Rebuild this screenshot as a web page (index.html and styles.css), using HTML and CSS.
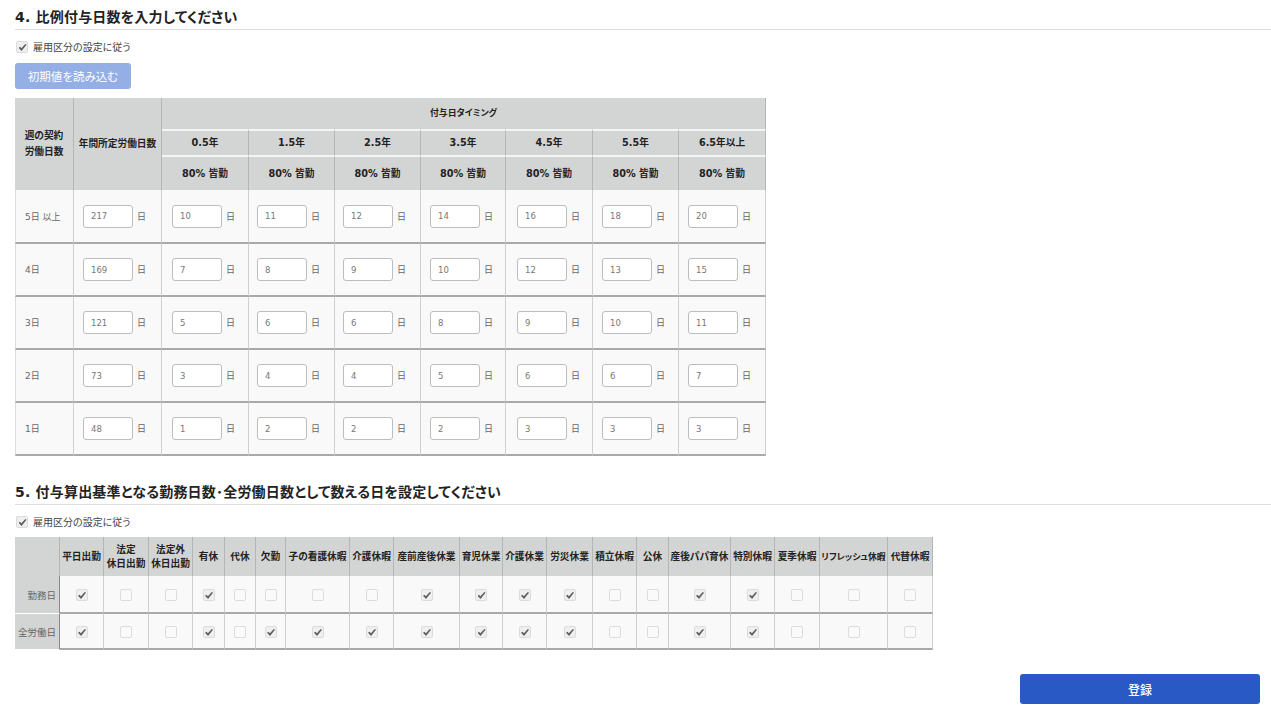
FILE: index.html
```html
<!DOCTYPE html>
<html lang="ja">
<head>
<meta charset="utf-8">
<title>比例付与日数</title>
<link rel="stylesheet" href="styles.css">
</head>
<body>
<section class="sec sec-4">
  <h2 class="title">4. 比例付与日数を入力してください</h2>
  <label class="follow"><input type="checkbox" class="cb" checked disabled><span>雇用区分の設定に従う</span></label>
  <button class="load" type="button" disabled>初期値を読み込む</button>
  <table class="grant">
    <colgroup><col class="g1"><col class="g2"><col class="g3"><col class="g4"><col class="g4"><col class="g5"><col class="g3"><col class="g4"><col class="g3"></colgroup>
    <thead>
      <tr class="h1"><th rowspan="3">週の契約<br>労働日数</th><th rowspan="3">年間所定労働日数</th><th colspan="7" class="timing">付与日タイミング</th></tr>
      <tr class="h2"><th>0.5年</th><th>1.5年</th><th>2.5年</th><th>3.5年</th><th>4.5年</th><th>5.5年</th><th>6.5年以上</th></tr>
      <tr class="h3"><th>80% 皆勤</th><th>80% 皆勤</th><th>80% 皆勤</th><th>80% 皆勤</th><th>80% 皆勤</th><th>80% 皆勤</th><th>80% 皆勤</th></tr>
    </thead>
    <tbody>
      <tr><td>5日 以上</td><td><input class="num" value="217" readonly><i>日</i></td><td><input class="num" value="10" readonly><i>日</i></td><td><input class="num" value="11" readonly><i>日</i></td><td><input class="num" value="12" readonly><i>日</i></td><td><input class="num" value="14" readonly><i>日</i></td><td><input class="num" value="16" readonly><i>日</i></td><td><input class="num" value="18" readonly><i>日</i></td><td><input class="num" value="20" readonly><i>日</i></td></tr>
      <tr><td>4日</td><td><input class="num" value="169" readonly><i>日</i></td><td><input class="num" value="7" readonly><i>日</i></td><td><input class="num" value="8" readonly><i>日</i></td><td><input class="num" value="9" readonly><i>日</i></td><td><input class="num" value="10" readonly><i>日</i></td><td><input class="num" value="12" readonly><i>日</i></td><td><input class="num" value="13" readonly><i>日</i></td><td><input class="num" value="15" readonly><i>日</i></td></tr>
      <tr><td>3日</td><td><input class="num" value="121" readonly><i>日</i></td><td><input class="num" value="5" readonly><i>日</i></td><td><input class="num" value="6" readonly><i>日</i></td><td><input class="num" value="6" readonly><i>日</i></td><td><input class="num" value="8" readonly><i>日</i></td><td><input class="num" value="9" readonly><i>日</i></td><td><input class="num" value="10" readonly><i>日</i></td><td><input class="num" value="11" readonly><i>日</i></td></tr>
      <tr><td>2日</td><td><input class="num" value="73" readonly><i>日</i></td><td><input class="num" value="3" readonly><i>日</i></td><td><input class="num" value="4" readonly><i>日</i></td><td><input class="num" value="4" readonly><i>日</i></td><td><input class="num" value="5" readonly><i>日</i></td><td><input class="num" value="6" readonly><i>日</i></td><td><input class="num" value="6" readonly><i>日</i></td><td><input class="num" value="7" readonly><i>日</i></td></tr>
      <tr><td>1日</td><td><input class="num" value="48" readonly><i>日</i></td><td><input class="num" value="1" readonly><i>日</i></td><td><input class="num" value="2" readonly><i>日</i></td><td><input class="num" value="2" readonly><i>日</i></td><td><input class="num" value="2" readonly><i>日</i></td><td><input class="num" value="3" readonly><i>日</i></td><td><input class="num" value="3" readonly><i>日</i></td><td><input class="num" value="3" readonly><i>日</i></td></tr>
    </tbody>
  </table>
</section>
<section class="sec sec-5">
  <h2 class="title">5. 付与算出基準となる勤務日数･全労働日数として数える日を設定してください</h2>
  <label class="follow"><input type="checkbox" class="cb" checked disabled><span>雇用区分の設定に従う</span></label>
  <table class="days">
    <colgroup><col class="w45"><col class="w44"><col class="w45"><col class="w44"><col class="w32"><col class="w31"><col class="w30"><col class="w64"><col class="w44"><col class="w66"><col class="w43"><col class="w44"><col class="w46"><col class="w44"><col class="w32"><col class="w62"><col class="w44"><col class="w45"><col class="w68"><col class="w45"></colgroup>
    <thead>
      <tr><th></th><th>平日出勤</th><th>法定<br>休日出勤</th><th>法定外<br>休日出勤</th><th>有休</th><th>代休</th><th>欠勤</th><th>子の看護休暇</th><th>介護休暇</th><th>産前産後休業</th><th>育児休業</th><th>介護休業</th><th>労災休業</th><th>積立休暇</th><th>公休</th><th>産後パパ育休</th><th>特別休暇</th><th>夏季休暇</th><th class="tight">リフレッシュ休暇</th><th>代替休暇</th></tr>
    </thead>
    <tbody>
      <tr><th>勤務日</th><td><input type="checkbox" class="cb" checked disabled></td><td><input type="checkbox" class="cb" disabled></td><td><input type="checkbox" class="cb" disabled></td><td><input type="checkbox" class="cb" checked disabled></td><td><input type="checkbox" class="cb" disabled></td><td><input type="checkbox" class="cb" disabled></td><td><input type="checkbox" class="cb" disabled></td><td><input type="checkbox" class="cb" disabled></td><td><input type="checkbox" class="cb" checked disabled></td><td><input type="checkbox" class="cb" checked disabled></td><td><input type="checkbox" class="cb" checked disabled></td><td><input type="checkbox" class="cb" checked disabled></td><td><input type="checkbox" class="cb" disabled></td><td><input type="checkbox" class="cb" disabled></td><td><input type="checkbox" class="cb" checked disabled></td><td><input type="checkbox" class="cb" checked disabled></td><td><input type="checkbox" class="cb" disabled></td><td><input type="checkbox" class="cb" disabled></td><td><input type="checkbox" class="cb" disabled></td></tr>
      <tr><th>全労働日</th><td><input type="checkbox" class="cb" checked disabled></td><td><input type="checkbox" class="cb" disabled></td><td><input type="checkbox" class="cb" disabled></td><td><input type="checkbox" class="cb" checked disabled></td><td><input type="checkbox" class="cb" disabled></td><td><input type="checkbox" class="cb" checked disabled></td><td><input type="checkbox" class="cb" checked disabled></td><td><input type="checkbox" class="cb" checked disabled></td><td><input type="checkbox" class="cb" checked disabled></td><td><input type="checkbox" class="cb" checked disabled></td><td><input type="checkbox" class="cb" checked disabled></td><td><input type="checkbox" class="cb" checked disabled></td><td><input type="checkbox" class="cb" disabled></td><td><input type="checkbox" class="cb" disabled></td><td><input type="checkbox" class="cb" checked disabled></td><td><input type="checkbox" class="cb" checked disabled></td><td><input type="checkbox" class="cb" disabled></td><td><input type="checkbox" class="cb" disabled></td><td><input type="checkbox" class="cb" disabled></td></tr>
    </tbody>
  </table>
</section>
<footer class="actions"><button class="submit" type="button">登録</button></footer>
</body>
</html>
```
FILE: styles.css
```css
html, body { margin: 0; padding: 0; background: #fff; }
body {
  width: 1271px; height: 712px; overflow: hidden;
  font-family: "DejaVu Sans", "Noto Sans CJK JP", sans-serif;
  font-feature-settings: "palt";
  font-size: 9px; color: #222;
}
.sec { padding-left: 15px; }
.sec-4 { padding-top: 8px; }
.sec-5 { padding-top: 27px; }
.title {
  margin: 0; height: 21px; line-height: 19px; font-size: 14px; font-weight: 700;
  color: #222; border-bottom: 1px solid #ddd; letter-spacing: 0.2px;
}
.follow { display: flex; align-items: center; gap: 5px; height: 12px; margin-top: 10px; color: #444; font-size: 10px; }
.follow .cb { margin: 2px 0 0 1px; }
.cb {
  appearance: none; -webkit-appearance: none; display: block; position: relative;
  width: 12px; height: 12px; margin: 0; background: #fafafa;
  border: 1px solid #dcdcdc; border-radius: 2px; box-sizing: border-box;
}
.cb:checked { background: #efefef; }
.cb:checked::after {
  content: ""; position: absolute; left: 1.5px; top: 2px; width: 8px; height: 7px; background: #5e5e5e;
  clip-path: polygon(0 55%, 18% 38%, 36% 62%, 85% 0, 100% 12%, 38% 100%);
}
.load {
  display: block; margin-top: 11px; width: 116px; height: 26px; padding: 0;
  background: #94aee6; border: 0; border-radius: 3px; color: #fff;
  font-family: inherit; font-feature-settings: "palt"; font-size: 11.5px;
}
table { border-collapse: separate; border-spacing: 0; table-layout: fixed; }
th, td { box-sizing: border-box; padding: 0; }
.grant { margin-top: 9px; width: 751px; }
.g1 { width: 59px; } .g2 { width: 88px; } .g3 { width: 87px; } .g4 { width: 86px; } .g5 { width: 85px; }
.grant th {
  background: #d3d5d4; font-weight: 700; font-size: 9.7px; color: #222; text-align: center;
  border-right: 1px solid #b4b6b5; line-height: 16px;
}
.grant .h1 th { height: 31px; }
.grant .h1 .timing { font-size: 8.9px; padding-bottom: 2px; }
.grant .h2 th { height: 26px; border-top: 2px solid #f4f4f4; }
.grant .h3 th { height: 35px; border-top: 2px solid #f4f4f4; }
.grant td {
  height: 53px; background: #f9f9f9; border-right: 1px solid #cfcfcf; border-bottom: 2px solid #a9a9a9;
  color: #666; font-size: 9px; white-space: nowrap; padding-left: 10px;
}
.grant tbody tr:first-child td { height: 54px; }
.grant td:first-child { border-left: 1px solid #ddd; padding-left: 9px; }
.grant td:nth-child(2) { padding-left: 9px; }
.grant td:nth-child(3) { padding-left: 10px; }
.grant td:nth-child(4), .grant td:nth-child(5) { padding-left: 8px; }
.grant td:nth-child(6) { padding-left: 9px; }
.grant td:nth-child(7) { padding-left: 11px; }
.grant td:nth-child(8), .grant td:nth-child(9) { padding-left: 9px; }
.num {
  display: inline-block; box-sizing: border-box; width: 50px; height: 23px; padding: 0 0 0 7px; vertical-align: middle;
  background: #fff; border: 1px solid #bdbdbd; border-radius: 3px; color: #777;
  font-family: inherit; font-size: 8.5px; outline: 0;
}
.grant i { font-style: normal; margin-left: 4px; color: #666; font-size: 9px; vertical-align: middle; }
.days { margin-top: 10px; width: 918px; }
.w30 { width: 30px; } .w31 { width: 31px; } .w32 { width: 32px; } .w43 { width: 43px; } .w44 { width: 44px; } .w45 { width: 45px; }
.w46 { width: 46px; } .w62 { width: 62px; } .w64 { width: 64px; } .w66 { width: 66px; } .w68 { width: 68px; }
.days thead th {
  height: 39px; background: #d3d5d4; border-right: 1px solid #b4b6b5; font-size: 9.7px; font-weight: 700;
  line-height: 14px; text-align: center; color: #222; white-space: nowrap;
}
.days thead .tight { font-size: 8.8px; }
.days tbody th {
  background: #d3d5d4; border-bottom: 1px solid #fff; border-right: 1px solid #888;
  color: #666; font-size: 9.5px; font-weight: 400; text-align: right; padding-right: 3px; white-space: nowrap;
}
.days tbody td {
  background: #f9f9f9; border-right: 1px solid #cfcfcf; border-bottom: 2px solid #a9a9a9; padding-top: 2px;
}
.days tbody tr:first-child th, .days tbody tr:first-child td { height: 38px; }
.days tbody tr:last-child th, .days tbody tr:last-child td { height: 36px; }
.days .cb { margin: 0 auto; }
.actions { display: flex; justify-content: flex-end; padding: 24px 11px 0 0; }
.submit {
  width: 240px; height: 30px; padding: 0; background: #2859c5; border: 0; border-radius: 3px;
  color: #fff; font-family: inherit; font-size: 12px; font-weight: 500;
}
```
